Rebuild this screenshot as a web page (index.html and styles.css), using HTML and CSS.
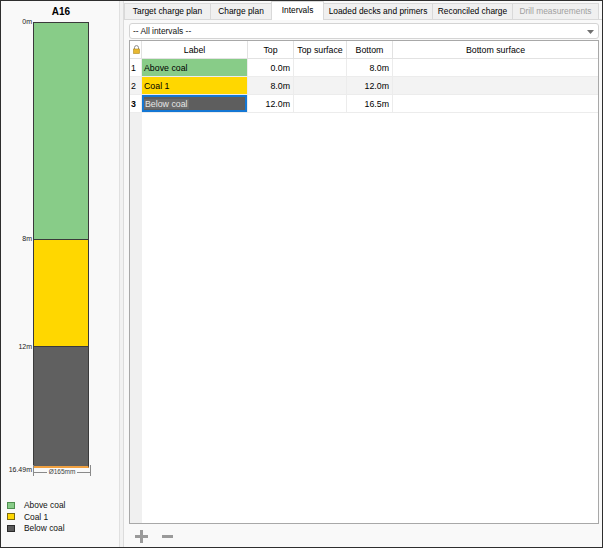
FILE: index.html
```html
<!DOCTYPE html>
<html>
<head>
<meta charset="utf-8">
<link rel="stylesheet" href="styles.css">
</head>
<body>
<div class="window">
  <aside class="left">
    <div class="hole-title">A16</div>
    <div class="hole">
      <div class="depth" style="top:0px">0m</div>
      <div class="depth" style="top:217px">8m</div>
      <div class="depth" style="top:325px">12m</div>
      <div class="depth" style="top:448px">16.49m</div>
      <div class="column">
        <div class="seg seg-green" style="height:216px"></div>
        <div class="seg seg-yellow" style="height:107px"></div>
        <div class="seg seg-dark" style="height:120px"></div>
      </div>
      <div class="dim">
        <span class="dim-line"></span>
        <span class="dim-text">Ø165mm</span>
        <span class="dim-line"></span>
      </div>
    </div>
    <ul class="legend">
      <li><span class="sw sw-green"></span>Above coal</li>
      <li><span class="sw sw-yellow"></span>Coal 1</li>
      <li><span class="sw sw-dark"></span>Below coal</li>
    </ul>
  </aside>
  <div class="splitter"></div>
  <main class="right">
    <nav class="tabs">
      <div class="tab">Target charge plan</div>
      <div class="tab">Charge plan</div>
      <div class="tab active">Intervals</div>
      <div class="tab">Loaded decks and primers</div>
      <div class="tab">Reconciled charge</div>
      <div class="tab disabled">Drill measurements</div>
    </nav>
    <section class="pane">
      <div class="select">
        <span>-- All intervals --</span>
        <svg class="caret" width="7" height="4" viewBox="0 0 7 4"><path d="M0 0H7L3.5 4Z" fill="#707070"/></svg>
      </div>
      <div class="table">
        <div class="row head">
          <div class="cell lock">
            <svg width="7" height="9" viewBox="0 0 7 9"><path d="M1.5 4V2.6a2 2 0 0 1 4 0V4" fill="none" stroke="#8a8a8a" stroke-width="1"/><rect x="0.5" y="4" width="6" height="4.5" fill="#e8b830" stroke="#b08a20" stroke-width="0.6"/></svg>
          </div>
          <div class="cell c">Label</div>
          <div class="cell c">Top</div>
          <div class="cell c">Top surface</div>
          <div class="cell c">Bottom</div>
          <div class="cell c">Bottom surface</div>
        </div>
        <div class="row">
          <div class="cell num">1</div>
          <div class="cell label lab-green">Above coal</div>
          <div class="cell r">0.0m</div>
          <div class="cell"></div>
          <div class="cell r">8.0m</div>
          <div class="cell"></div>
        </div>
        <div class="row alt">
          <div class="cell num">2</div>
          <div class="cell label lab-yellow">Coal 1</div>
          <div class="cell r">8.0m</div>
          <div class="cell"></div>
          <div class="cell r">12.0m</div>
          <div class="cell"></div>
        </div>
        <div class="row">
          <div class="cell num current">3</div>
          <div class="cell label lab-dark editing"><span class="sel">Below coal</span></div>
          <div class="cell r">12.0m</div>
          <div class="cell"></div>
          <div class="cell r">16.5m</div>
          <div class="cell"></div>
        </div>
        <div class="filler"></div>
      </div>
      <div class="actions">
        <svg width="15" height="15" viewBox="0 0 15 15"><path d="M7.5 1V14M1 7.5H14" stroke="#9a9a9a" stroke-width="3"/></svg>
        <svg width="13" height="15" viewBox="0 0 13 15"><path d="M1 7.5H12" stroke="#9a9a9a" stroke-width="3"/></svg>
      </div>
    </section>
  </main>
</div>
</body>
</html>
```

FILE: styles.css
```css
* { box-sizing: border-box; margin: 0; padding: 0; }
html, body { width: 603px; height: 548px; overflow: hidden; }
body { font-family: "Liberation Sans", Arial, sans-serif; color: #000; background: #f9f9f9; }

.window {
  width: 603px; height: 548px;
  border: 1px solid #2e2e2e;
  display: flex;
  background: #f9f9f9;
}

/* left panel */
.left { width: 118px; display: flex; flex-direction: column; background: #f9f9f9; }
.hole-title { height: 21px; line-height: 22px; text-align: center; font-weight: bold; font-size: 10px; padding-left: 2px; }
.hole { position: relative; }
.depth {
  position: absolute; right: 87px;
  transform: translateY(-50%);
  font-size: 7px; line-height: 8px; color: #222; white-space: nowrap;
}
.column {
  margin-left: 32px; width: 56px;
  border: 1px solid #3a3a3a; border-bottom: 2px solid #f0a040;
  display: flex; flex-direction: column;
}
.seg + .seg { border-top: 1px solid #3a3a3a; }
.seg-green { background: #88cc88; }
.seg-yellow { background: #ffd700; }
.seg-dark { background: #606060; }

.dim {
  margin-left: 32px; width: 56px; height: 8px;
  border-left: 1px solid #8a8a8a; border-right: 1px solid #8a8a8a;
  display: flex; align-items: center; gap: 2px;
  margin-top: -3px; padding-top: 3px; box-sizing: content-box;
}
.dim-line { flex: 1; height: 1px; background: #8a8a8a; }
.dim-text { font-size: 6.5px; color: #444; line-height: 8px; }

.legend { list-style: none; margin-top: auto; padding: 0 0 13px 6px; }
.legend li { display: flex; align-items: center; height: 11.5px; font-size: 8.4px; color: #111; }
.sw { width: 8px; height: 7px; margin-right: 9px; border: 1px solid; }
.sw-green { background: #88cc88; border-color: #4f8f4f; }
.sw-yellow { background: #ffd700; border-color: #7a6a10; }
.sw-dark { background: #5a5a5a; border-color: #2a2a2a; }

.splitter { width: 5px; background: #f2f2f2; border-left: 1px solid #e0e0e0; border-right: 1px solid #dcdcdc; }

/* right panel */
.right { flex: 1; display: flex; flex-direction: column; min-width: 0; background: #f9f9f9; }
.tabs { height: 19px; display: flex; align-items: flex-end; border-bottom: 1px solid #d9d9d9; }
.tab {
  height: 16px; line-height: 15px; text-align: center;
  background: #f0f0f0; border: 1px solid #d9d9d9; border-bottom: none;
  margin-right: -1px; font-size: 8.4px; white-space: nowrap; color: #000;
}
.tab:nth-child(1) { width: 87px; }
.tab:nth-child(2) { width: 62px; }
.tab:nth-child(3) { width: 53px; }
.tab:nth-child(4) { width: 110px; }
.tab:nth-child(5) { width: 81px; }
.tab:nth-child(6) { width: 87px; }
.tab.active { height: 19px; line-height: 17px; background: #fff; margin-bottom: -1px; position: relative; z-index: 1; }
.tab.disabled { color: #a0a0a0; }

.pane { flex: 1; display: flex; flex-direction: column; padding: 3px 3px 0 5px; }
.select {
  height: 16px; background: #fff; border: 1px solid #d4d4d4; border-radius: 3px;
  display: flex; align-items: center; justify-content: space-between;
  padding: 0 4px 0 3px; font-size: 8.4px; color: #111;
}
.caret { margin-top: 1px; }

.table {
  margin-top: 1px; flex: 1;
  border: 1px solid #a8a8a8;
  background: #fff;
  display: flex; flex-direction: column;
}
.row { display: grid; grid-template-columns: 12px 106px 46px 53px 46px 1fr; height: 18px; border-bottom: 1px solid #ececec; font-size: 8.8px; }
.row.head { border-bottom-color: #e2e2e2; }
.row.alt { background: #f3f3f3; }
.cell { border-right: 1px solid #ececec; display: flex; align-items: center; white-space: nowrap; overflow: hidden; }
.head .cell { border-right-color: #e2e2e2; }
.cell:last-child { border-right: none; }
.cell.c { justify-content: center; }
.cell.r { justify-content: flex-end; padding-right: 3px; }
.cell.lock { justify-content: center; padding-left: 1px; }
.cell.num { padding-left: 1px; }
.cell.current { font-weight: bold; }
.cell.label { padding-left: 2px; }
.lab-green { background: #88cc88; }
.lab-yellow { background: #ffd700; }
.lab-dark { background: #5e5e5e; color: #e6e6e6; }
.editing { box-shadow: inset 0 0 0 2px #1477d4; }
.sel { background: #6a6a6a; padding: 0 1px; }
.filler { flex: 1; background: linear-gradient(to right, #f0f0f0 12px, #fff 12px); }

.actions { height: 23px; display: flex; align-items: center; gap: 12px; padding-left: 5px; padding-top: 2px; }
```
